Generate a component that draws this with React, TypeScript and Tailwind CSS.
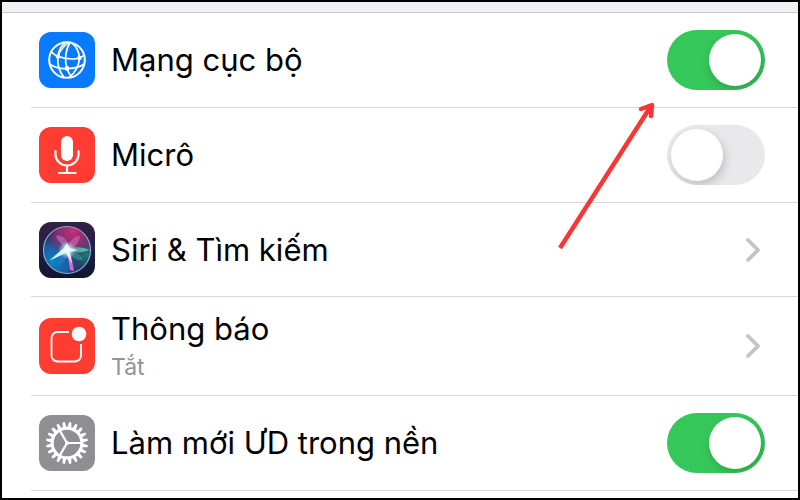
import { useState } from 'react';
import type { ReactNode } from 'react';

function NetworkIcon() {
  return (
    <svg viewBox="0 0 56 56" className="size-14 shrink-0" fill="none" stroke="#fff" strokeWidth="1.7" aria-hidden="true">
      <rect width="56" height="56" rx="12" fill="#077afd" stroke="none" />
      <circle cx="28" cy="28" r="17.8" strokeWidth="2" />
      <path d="M27 10.500C22 14 19 19 19 25C18 32 20 39 25 45.500" />
      <path d="M31 10.500C27 17 25 27 28 36.500C29 40 31 43 33 45" />
      <path d="M33 11C38 15 40 20 40.500 26C40 34 37 40 30 45.500" />
      <path d="M12.500 20C15 22 17 24 19 24.500C27 27 34 28 40.500 26C42 25.500 44 24 45 23" />
      <path d="M10.500 32C15 35 22 37 28 36.500C35 36.500 41 35 45 32" />
      <path d="M19 24.500C21 18 25 14 30 10.500" strokeWidth="1.4" />
      <g fill="#fff" stroke="none">
        <circle cx="19" cy="24.500" r="2.200" />
        <circle cx="40.500" cy="26" r="2.200" />
        <circle cx="28" cy="36.500" r="2.400" />
      </g>
    </svg>
  );
}

function MicIcon() {
  return (
    <svg viewBox="0 0 56 56" className="size-14 shrink-0" fill="none" stroke="#fff" strokeWidth="2.2" strokeLinecap="round" aria-hidden="true">
      <rect width="56" height="56" rx="12" fill="#fe3c31" stroke="none" />
      <rect x="22" y="9" width="12" height="25" rx="6" fill="#fff" stroke="none" />
      <path d="M16.500 24v3.500a11.500 11 0 0 0 23 0V24M28 38.500V46M20 46h16.500" />
    </svg>
  );
}

function SiriIcon() {
  return (
    <svg viewBox="0 0 56 56" className="size-14 shrink-0" aria-hidden="true">
      <defs>
        <linearGradient id="siri-tile" x1="0" y1="0" x2="0" y2="1">
          <stop offset="0" stopColor="#352044" />
          <stop offset="0.5" stopColor="#20204a" />
          <stop offset="1" stopColor="#12152e" />
        </linearGradient>
        <radialGradient id="siri-pink" cx="0.62" cy="0.1" r="0.6">
          <stop offset="0" stopColor="#c92e78" />
          <stop offset="0.6" stopColor="#8a3078" stopOpacity="0.8" />
          <stop offset="1" stopColor="#70307c" stopOpacity="0" />
        </radialGradient>
        <radialGradient id="siri-blue" cx="0.2" cy="0.75" r="0.6">
          <stop offset="0" stopColor="#0884c8" />
          <stop offset="0.6" stopColor="#1967ad" stopOpacity="0.8" />
          <stop offset="1" stopColor="#204080" stopOpacity="0" />
        </radialGradient>
        <radialGradient id="siri-teal" cx="0.9" cy="0.6" r="0.45">
          <stop offset="0" stopColor="#12807a" />
          <stop offset="1" stopColor="#135062" stopOpacity="0" />
        </radialGradient>
        <radialGradient id="siri-core">
          <stop offset="0" stopColor="#fff" />
          <stop offset="0.35" stopColor="#d9faff" stopOpacity="0.8" />
          <stop offset="1" stopColor="#87d5ed" stopOpacity="0" />
        </radialGradient>
      </defs>
      <rect width="56" height="56" rx="12" fill="url(#siri-tile)" />
      <circle cx="28" cy="28" r="23.500" fill="#30285f" />
      <circle cx="28" cy="28" r="23.500" fill="url(#siri-blue)" />
      <circle cx="28" cy="28" r="23.500" fill="url(#siri-teal)" />
      <circle cx="28" cy="28" r="23.500" fill="url(#siri-pink)" />
      <path d="M28 27C23 23 18 18 17 14C22 12 29 17 30 26Z" fill="#c58ac4" opacity="0.5" />
      <path d="M28 27C30 19 36 13 41 14C40 20 36 27 30 29Z" fill="#d66cae" opacity="0.6" />
      <path d="M29 27C36 24 45 25 51 28C44 31 36 31 29 29Z" fill="#55d3ac" opacity="0.75" />
      <path d="M29 28C37 29 43 34 44 38C37 39 31 34 29 30Z" fill="#3dbb9f" opacity="0.45" />
      <path d="M28 28L32 33L35 49L31 48C30 40 29 34 26 29Z" fill="#dc70d6" opacity="0.9" />
      <path d="M28 27L23 33L10 39L22 28Z" fill="#61d8f5" opacity="0.9" />
      <path d="M27 28C21 32 18 38 19 43C25 41 29 35 29 28Z" fill="#337ed8" opacity="0.45" />
      <circle cx="28" cy="28" r="9" fill="url(#siri-core)" />
      <path d="M28 21L31 26L39 28L31 30L33 42L27 31L11 38L24 27Z" fill="#eaffff" opacity="0.8" />
      <circle cx="28" cy="28" r="23.500" fill="none" stroke="#87a9c0" strokeWidth="1.2" />
    </svg>
  );
}

function NotificationIcon() {
  return (
    <svg viewBox="0 0 56 56" className="size-14 shrink-0" aria-hidden="true">
      <rect width="56" height="56" rx="12" fill="#fe3c31" />
      <path d="M30 14H18.500A6 6 0 0 0 12.500 20V37.500A6 6 0 0 0 18.500 43.500H36A6 6 0 0 0 42 37.500V26" fill="none" stroke="#fff" strokeWidth="1.8" />
      <circle cx="40" cy="16" r="7.300" fill="#fff" />
    </svg>
  );
}

function GearIcon() {
  const teeth = Array.from({ length: 20 }, (_, i) => i * 18);
  return (
    <svg viewBox="0 0 56 56" className="size-14 shrink-0" aria-hidden="true">
      <rect width="56" height="56" rx="12" fill="#8e8e93" />
      {teeth.map((angle) => (
        <path key={angle} d="M26 13L26.900 7H29.100L30 13Z" fill="#fff" transform={`rotate(${angle + 9} 28 28)`} />
      ))}
      <g fill="none" stroke="#fff">
        <circle cx="28" cy="28" r="14.800" strokeWidth="3" />
        <path d="M28 28H42M28 28L21 15.900M28 28L21 40.100" strokeWidth="2.200" />
      </g>
      <circle cx="28" cy="28" r="2" fill="#fff" />
    </svg>
  );
}

function Chevron() {
  return (
    <svg viewBox="0 0 20 28" className="h-7 w-5 shrink-0" fill="none" stroke="#c4c4c7" strokeWidth="3.8" strokeLinecap="round" strokeLinejoin="round" aria-hidden="true">
      <path d="M3 4L13 14L3 24" />
    </svg>
  );
}

interface ToggleRowProps {
  id: string;
  icon: ReactNode;
  label: string;
  initial?: boolean;
}

function ToggleRow({ id, icon, label, initial = false }: ToggleRowProps) {
  const [on, setOn] = useState(initial);

  return (
    <li className="flex min-h-[95px] items-center gap-4 border-b border-[#d9d9db] pr-[33px] pl-2">
      {icon}
      <label htmlFor={id} className="flex-1 text-[31px] leading-10">
        {label}
      </label>
      <input
        id={id}
        type="checkbox"
        role="switch"
        checked={on}
        onChange={(e) => setOn(e.target.checked)}
        className="flex h-[60px] w-[98px] shrink-0 cursor-pointer appearance-none items-center overflow-hidden rounded-full bg-[#e9e9eb] px-1 before:size-[52px] before:rounded-full before:bg-white before:shadow-[2px_4px_10px_rgba(0,0,0,0.18)] before:content-[''] checked:justify-end checked:bg-[#35c759]"
      />
    </li>
  );
}

interface LinkRowProps {
  icon: ReactNode;
  label: string;
  detail?: string;
}

function LinkRow({ icon, label, detail }: LinkRowProps) {
  return (
    <li className="border-b border-[#d9d9db]">
      <button type="button" className="flex min-h-[93px] w-full cursor-pointer items-center gap-4 py-3 pr-[33px] pl-2 text-left">
        {icon}
        <span className="flex flex-1 flex-col">
          <span className="text-[31px] leading-10">{label}</span>
          {detail && <span className="pt-0.5 text-[23px] leading-8 text-[#929296]">{detail}</span>}
        </span>
        <Chevron />
      </button>
    </li>
  );
}

export default function App() {
  return (
    <main className="relative min-h-screen border-2 border-black bg-white font-['Inter',sans-serif] text-black">
      <div className="h-[11px] border-b border-[#c9c9cc] bg-[#f1f1f4]" />
      <ul className="pl-[29px]">
        <ToggleRow id="local-network" icon={<NetworkIcon />} label="Mạng cục bộ" initial />
        <ToggleRow id="microphone" icon={<MicIcon />} label="Micrô" />
        <LinkRow icon={<SiriIcon />} label="Siri & Tìm kiếm" />
        <LinkRow icon={<NotificationIcon />} label="Thông báo" detail="Tắt" />
        <ToggleRow id="background-refresh" icon={<GearIcon />} label="Làm mới ƯD trong nền" initial />
      </ul>
      {/* Arrow pointing at the local network switch */}
      <svg
        viewBox="0 0 104 156"
        className="pointer-events-none absolute top-24 right-[138px] h-[156px] w-[104px]"
        fill="none"
        stroke="#f93535"
        strokeWidth="4.5"
        aria-hidden="true"
      >
        <path d="M4 150L95 8" />
        <path d="M85 11L96 7L95 18" strokeLinecap="round" strokeLinejoin="round" />
      </svg>
    </main>
  );
}
